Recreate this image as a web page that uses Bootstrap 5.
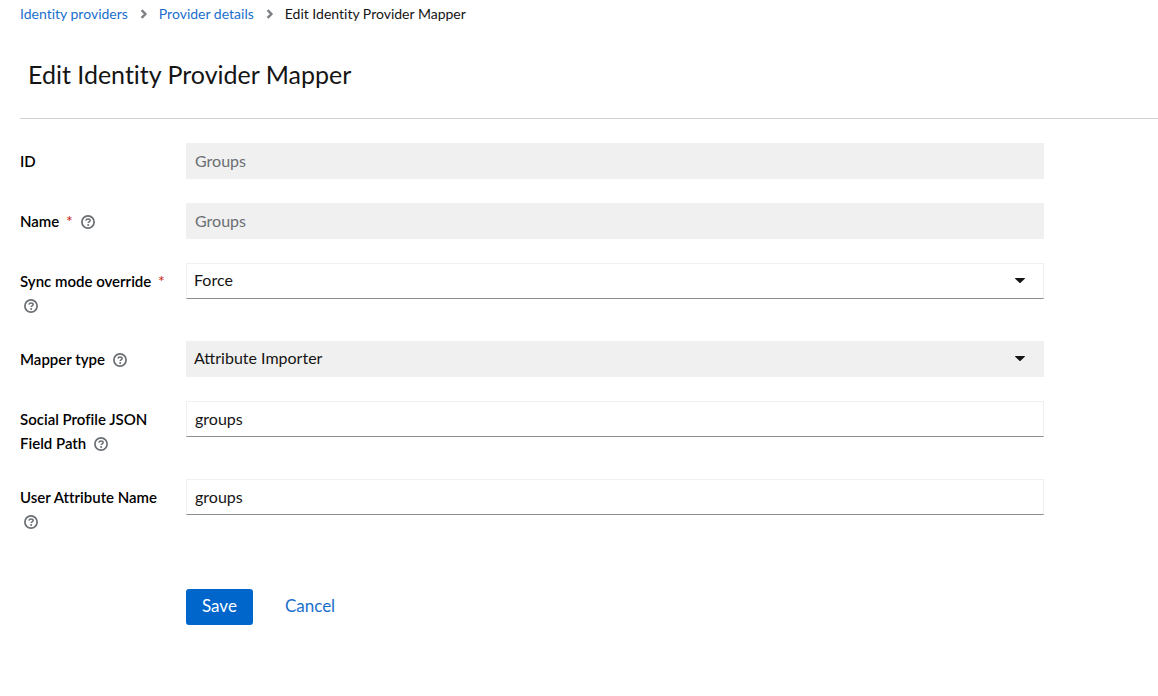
<!DOCTYPE html>
<html lang="en">
<head>
<meta charset="utf-8">
<meta name="viewport" content="width=device-width, initial-scale=1">
<title>Edit Identity Provider Mapper</title>
<link href="https://cdn.jsdelivr.net/npm/bootstrap@5.3.0/dist/css/bootstrap.min.css" rel="stylesheet">
<style>
  body {
    font-family: Lato, "Liberation Sans", sans-serif;
    font-size: 16px;
    line-height: 24px;
    color: #151515;
    background: #fff;
    font-variant-ligatures: none;
  }
  a, .form-actions .btn-link { color: #1a6fcb; text-decoration: none; }
  .page { padding: 2px 0 32px 20px; }
  .breadcrumb { font-size: 14px; }
  .breadcrumb-item + .breadcrumb-item { padding-left: 0; }
  .breadcrumb-item + .breadcrumb-item::before { content: none; }
  .crumb-sep { width: 8px; height: 10px; margin: 0 11px 0 12px; }
  .page-title { font-size: 25px; line-height: 32px; font-weight: 400; padding: 32px 8px 28px; }
  .rule { border-top: 1px solid #d2d2d2; }
  .mapper-form {
    display: grid;
    grid-template-columns: 150px minmax(0, 1fr);
    gap: 24px 16px;
    width: 90%;
    padding-top: 24px;
  }
  .field-label { padding-top: 6px; font-size: 15px; font-weight: 600; color: #000; }
  .field-label label { display: inline; }
  .required { color: #c9190b; margin-left: 3px; font-weight: 400; font-size: 16px; line-height: 16px; }
  .help-btn { display: inline-block; padding: 0; margin-left: 4px; border: 0; background: none; color: #6a6e73; line-height: 14px; vertical-align: -2px; }
  .help-btn svg { display: block; width: 14px; height: 14px; }
  .form-control, .form-select {
    height: 36px;
    padding: 4px 8px 6px;
    font-size: 16px;
    line-height: 24px;
    color: #151515;
    background-color: #fff;
    border: 1px solid #f0f0f0;
    border-bottom-color: #8a8d90;
    border-radius: 0;
  }
  .form-select {
    padding: 4px 40px 6px 7px;
    background-image: url("data:image/svg+xml,%3Csvg xmlns='http://www.w3.org/2000/svg' viewBox='0 0 10 5'%3E%3Cpath d='M.4 0h9.2q.6.2.2.8L5.6 4.7q-.6.5-1.2 0L.2.8Q-.2.2.4 0z' fill='%23151515'/%3E%3C/svg%3E");
    background-size: 10px 5px;
    background-position: right 18px top 14px;
  }
  .form-control:disabled, .form-select:disabled { background-color: #f0f0f0; border-color: #f0f0f0; opacity: 1; }
  .form-control:disabled { color: #6a6e73; }
  .form-select:disabled { color: #151515; }
  .form-actions { grid-column: 2; padding-top: 32px; }
  .form-actions .btn { font-size: 17px; line-height: 24px; padding: 5px 16px 7px; border: 0; border-radius: 3px; }
  .form-actions .btn-primary { background: #06c; }
</style>
</head>
<body>
<svg class="d-none" aria-hidden="true">
  <symbol id="help" viewBox="0 0 14 14">
    <circle cx="7" cy="7" r="6.1" fill="none" stroke="currentColor" stroke-width="1.7"/>
    <path d="M4.900 5.600C5.100 4.400 5.900 3.900 7 3.900c1.300 0 2.200.6 2.200 1.700 0 1.400-2 1.300-2 2.500" fill="none" stroke="currentColor" stroke-width="1.500"/>
    <circle cx="7.100" cy="10" r="1" fill="currentColor"/>
  </symbol>
  <symbol id="chevron" viewBox="0 0 8 10">
    <path d="M1.600 1.200 5.400 5 1.600 8.800" fill="none" stroke="#7c7f83" stroke-width="2.400"/>
  </symbol>
</svg>
<main class="page">
  <nav aria-label="Breadcrumb">
    <ol class="breadcrumb mb-0">
      <li class="breadcrumb-item"><a href="#">Identity providers</a></li>
      <li class="breadcrumb-item d-flex align-items-center"><svg class="crumb-sep" aria-hidden="true"><use href="#chevron"/></svg><a href="#">Provider details</a></li>
      <li class="breadcrumb-item d-flex align-items-center text-reset" aria-current="page"><svg class="crumb-sep" aria-hidden="true"><use href="#chevron"/></svg>Edit Identity Provider Mapper</li>
    </ol>
  </nav>
  <h1 class="page-title mb-0">Edit Identity Provider Mapper</h1>
  <div class="rule"></div>

  <form class="mapper-form">
    <div class="field-label"><label for="mapper-id">ID</label></div>
    <div><input class="form-control" type="text" id="mapper-id" value="Groups" disabled></div>

    <div class="field-label"><label for="name">Name <span class="required">*</span></label> <button type="button" class="help-btn" aria-label="Help for name"><svg><use href="#help"/></svg></button></div>
    <div><input class="form-control" type="text" id="name" value="Groups" disabled></div>

    <div class="field-label"><label for="sync-mode">Sync mode override <span class="required">*</span></label> <button type="button" class="help-btn" aria-label="Help for sync mode override"><svg><use href="#help"/></svg></button></div>
    <div><select class="form-select" id="sync-mode"><option>Force</option></select></div>

    <div class="field-label"><label for="mapper-type">Mapper type</label> <button type="button" class="help-btn" aria-label="Help for mapper type"><svg><use href="#help"/></svg></button></div>
    <div><select class="form-select" id="mapper-type" disabled><option>Attribute Importer</option></select></div>

    <div class="field-label"><label for="json-path">Social Profile JSON Field Path</label> <button type="button" class="help-btn" aria-label="Help for JSON field path"><svg><use href="#help"/></svg></button></div>
    <div><input class="form-control" type="text" id="json-path" value="groups"></div>

    <div class="field-label"><label for="user-attribute">User Attribute Name</label> <button type="button" class="help-btn" aria-label="Help for user attribute name"><svg><use href="#help"/></svg></button></div>
    <div><input class="form-control" type="text" id="user-attribute" value="groups"></div>

    <div class="form-actions d-flex gap-3">
      <button type="submit" class="btn btn-primary">Save</button>
      <button type="button" class="btn btn-link">Cancel</button>
    </div>
  </form>
</main>
<script src="https://cdn.jsdelivr.net/npm/bootstrap@5.3.0/dist/js/bootstrap.bundle.min.js"></script>
</body>
</html>
